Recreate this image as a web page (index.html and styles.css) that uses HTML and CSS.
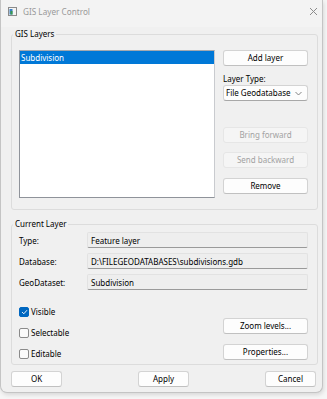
FILE: index.html
```html
<!DOCTYPE html>
<html lang="en">
<head>
    <meta charset="utf-8">
    <title>GIS Layer Control</title>
    <link rel="stylesheet" href="styles.css">
</head>
<body>
    <div class="window">
        <div class="titlebar">
            <svg class="app-icon" width="9" height="9" viewBox="0 0 9 9">
                <rect x="0.5" y="0.5" width="8" height="8" fill="#f4f4f4" stroke="#8a8a8a"/>
                <rect x="1.5" y="2" width="3" height="5.5" fill="#3a7fc4"/>
                <rect x="2.5" y="4" width="2" height="3.5" fill="#3c9a4a"/>
            </svg>
            <span class="title">GIS Layer Control</span>
            <svg class="close" width="9" height="9" viewBox="0 0 9 9">
                <path d="M1 1 L8 8 M8 1 L1 8" stroke="#8c8c8c" stroke-width="1"/>
            </svg>
        </div>

        <div class="content">
            <fieldset class="group layers">
                <legend>GIS Layers</legend>
                <div class="layers-row">
                    <div class="listbox">
                        <div class="list-item selected">Subdivision</div>
                    </div>
                    <div class="side">
                        <button class="btn">Add layer</button>
                        <label class="side-label">Layer Type:</label>
                        <div class="select">
                            <span>File Geodatabase</span>
                            <svg width="7" height="5" viewBox="0 0 7 5">
                                <path d="M0.5 1 L3.5 4 L6.5 1" fill="none" stroke="#777" stroke-width="0.9"/>
                            </svg>
                        </div>
                        <button class="btn btn-forward" disabled>Bring forward</button>
                        <button class="btn btn-backward" disabled>Send backward</button>
                        <button class="btn btn-remove">Remove</button>
                    </div>
                </div>
            </fieldset>

            <fieldset class="group current">
                <legend>Current Layer</legend>
                <div class="props">
                    <span class="prop-label">Type:</span>
                    <div class="prop-value">Feature layer</div>
                    <span class="prop-label">Database:</span>
                    <div class="prop-value">D:\FILEGEODATABASES\subdivisions.gdb</div>
                    <span class="prop-label">GeoDataset:</span>
                    <div class="prop-value">Subdivision</div>
                </div>
                <div class="options">
                    <div class="checks">
                        <label class="check"><span class="box checked"><svg width="7" height="6" viewBox="0 0 7 6"><path d="M1 3 L2.8 4.8 L6 1.2" fill="none" stroke="#fff" stroke-width="0.9"/></svg></span>Visible</label>
                        <label class="check"><span class="box"></span>Selectable</label>
                        <label class="check"><span class="box"></span>Editable</label>
                    </div>
                    <div class="side side-bottom">
                        <button class="btn">Zoom levels...</button>
                        <button class="btn">Properties...</button>
                    </div>
                </div>
            </fieldset>
        </div>

        <div class="footer">
            <button class="btn btn-footer">OK</button>
            <button class="btn btn-footer">Apply</button>
            <button class="btn btn-footer">Cancel</button>
        </div>
    </div>
</body>
</html>
```

FILE: styles.css
```css
* {
    margin: 0;
    padding: 0;
    box-sizing: border-box;
}

body {
    font-family: "Noto Sans", "Open Sans", sans-serif;
    font-size: 8px;
    color: #000;
    background: #f6f6f6;
    width: 327px;
    height: 399px;
    overflow: hidden;
}

.window {
    width: 323px;
    height: 393px;
    background: #f0f0f0;
    border: 1px solid #c4c4c4;
    border-top: none;
    border-radius: 0 0 7px 7px;
    box-shadow: 1px 2px 4px rgba(0, 0, 0, 0.12);
    display: flex;
    flex-direction: column;
}

/* title bar */
.titlebar {
    height: 27px;
    display: flex;
    align-items: flex-start;
    padding: 7px 0 0 7px;
    background: #f3f3f3;
}

.app-icon {
    flex: none;
}

.title {
    margin-left: 6px;
    color: #999;
    font-size: 8.2px;
    line-height: 10px;
}

.close {
    margin-left: auto;
    margin-right: 4px;
}

/* group boxes */
.content {
    padding: 0 4px 0 10px;
}

.group {
    border: 1px solid #dcdcdc;
    border-radius: 3px;
    min-width: 0;
}

.group legend {
    margin-left: -6px;
    padding: 0 2px;
    line-height: 14px;
    font-size: 8px;
}

.layers {
    padding: 9px 9px 11px 7px;
}

.layers-row {
    display: flex;
    gap: 8px;
}

.listbox {
    width: 196px;
    height: 148px;
    background: #fff;
    border: 1px solid #8f939a;
    border-top-color: #a6a9ae;
    border-right-color: #c9cbcf;
}

.list-item {
    height: 13px;
    line-height: 13px;
    padding-left: 1px;
}

.list-item.selected {
    background: #0078d7;
    color: #fff;
}

.side {
    width: 85px;
    display: flex;
    flex-direction: column;
}

.side-label {
    margin-top: 6px;
    line-height: 13px;
}

/* buttons */
.btn {
    height: 16px;
    font-family: inherit;
    font-size: 8px;
    color: #000;
    background: #fdfdfd;
    border: 1px solid #d3d3d3;
    border-bottom-color: #c0c0c0;
    border-radius: 3px;
    line-height: 14px;
    white-space: nowrap;
}

.btn:disabled {
    background: #f5f5f5;
    border-color: #e6e6e6;
    color: #a2a2a2;
}

.btn-forward {
    margin-top: 26px;
}

.btn-backward {
    margin-top: 9px;
}

.btn-remove {
    margin-top: 10px;
}

.select {
    height: 16px;
    background: #fdfdfd;
    border: 1px solid #d3d3d3;
    border-bottom-color: #a8a8a8;
    border-radius: 3px;
    display: flex;
    align-items: center;
    justify-content: space-between;
    padding: 0 5px 0 2px;
    line-height: 14px;
    white-space: nowrap;
}

.select svg {
    flex: none;
}

/* current layer */
.current {
    margin-top: 7px;
    padding: 1px 9px 3px 7px;
}

.props {
    display: grid;
    grid-template-columns: 68px 1fr;
    row-gap: 5px;
    align-items: center;
}

.prop-value {
    height: 16px;
    line-height: 15px;
    background: #eeeeee;
    border: 1px solid #e2e2e2;
    border-bottom: 1px solid #9a9a9a;
    border-radius: 2px;
    padding-left: 3px;
    white-space: nowrap;
}

.options {
    margin-top: 15px;
    display: flex;
    justify-content: space-between;
    align-items: flex-end;
}

.checks {
    display: flex;
    flex-direction: column;
    gap: 7px;
}

.check {
    display: flex;
    align-items: center;
    gap: 2px;
    line-height: 14px;
}

.box {
    width: 10px;
    height: 10px;
    border: 1px solid #8a8a8a;
    border-radius: 2px;
    background: #fafafa;
    display: flex;
    align-items: center;
    justify-content: center;
}

.box.checked {
    background: #0067c0;
    border-color: #0067c0;
}

.side-bottom {
    gap: 10px;
    margin-bottom: 1px;
}

/* footer */
.footer {
    display: flex;
    justify-content: space-between;
    padding: 6px 6px 0 10px;
}

.btn-footer {
    width: 51px;
}
```
